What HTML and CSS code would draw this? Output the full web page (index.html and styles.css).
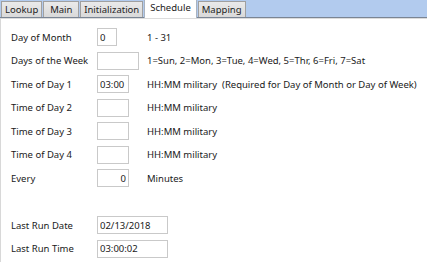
FILE: index.html
```html
<!DOCTYPE html>
<html lang="en">
<head>
    <meta charset="UTF-8">
    <title>Schedule</title>
    <link rel="stylesheet" href="styles.css">
</head>
<body>
    <div class="tabs">
        <div class="tab">Lookup</div>
        <div class="tab">Main</div>
        <div class="tab">Initialization</div>
        <div class="tab active">Schedule</div>
        <div class="tab">Mapping</div>
    </div>
    <div class="panel">
        <div class="form">
            <label>Day of Month</label>
            <input class="w-xs" type="text" value="0">
            <span class="hint">1 - 31</span>

            <label>Days of the Week</label>
            <input class="w-md" type="text" value="">
            <span class="hint">1=Sun, 2=Mon, 3=Tue, 4=Wed, 5=Thr, 6=Fri, 7=Sat</span>

            <label>Time of Day 1</label>
            <input class="w-sm" type="text" value="03:00">
            <span class="hint">HH:MM military &nbsp;(Required for Day of Month or Day of Week)</span>

            <label>Time of Day 2</label>
            <input class="w-sm" type="text" value="">
            <span class="hint">HH:MM military</span>

            <label>Time of Day 3</label>
            <input class="w-sm" type="text" value="">
            <span class="hint">HH:MM military</span>

            <label>Time of Day 4</label>
            <input class="w-sm" type="text" value="">
            <span class="hint">HH:MM military</span>

            <label>Every</label>
            <input class="w-sm num" type="text" value="0">
            <span class="hint">Minutes</span>

            <div class="spacer"></div>

            <label>Last Run Date</label>
            <input class="w-lg" type="text" value="02/13/2018">
            <span class="hint"></span>

            <label>Last Run Time</label>
            <input class="w-lg" type="text" value="03:00:02">
            <span class="hint"></span>
        </div>
    </div>
</body>
</html>
```

FILE: styles.css
```css
body {
    margin: 0;
    font-family: "Noto Sans", "Open Sans", sans-serif;
    font-size: 9.5px;
    color: #1a1a1a;
    background-color: #fff;
}
.tabs {
    display: flex;
    align-items: flex-end;
    height: 17px;
    padding-left: 1px;
    background-color: #b2cbee;
    border-bottom: 1px solid #7a8594;
}
.tab {
    min-width: 28px;
    height: 15px;
    line-height: 15px;
    padding: 0 3px;
    margin-right: 1px;
    text-align: center;
    background: linear-gradient(#eaeaea, #d9d9d9);
    border: 1px solid #a0a0a0;
    border-bottom: none;
    color: #222;
}
.tab.active {
    height: 18px;
    line-height: 15px;
    margin-bottom: -1px;
    padding: 0 5px;
    background: #fff;
    border-color: #a9b3c0;
}
.panel {
    height: 244px;
    border-top: 1px solid #dcdcdc;
    border-left: 1px solid #d8d8d8;
}
.form {
    display: grid;
    grid-template-columns: 86px 50px 1fr;
    grid-auto-rows: 18px;
    row-gap: 5.5px;
    align-items: center;
    padding: 9px 0 0 10px;
}
.form label {
    white-space: nowrap;
}
.form input {
    box-sizing: border-box;
    height: 18px;
    padding: 0 2px;
    font-family: inherit;
    font-size: 9.5px;
    color: #1a1a1a;
    border: 1px solid #c9c9c9;
    background: #fff;
    outline: none;
}
.form .hint {
    white-space: nowrap;
}
.form .spacer {
    grid-column: 1 / -1;
    height: 16px;
}
.w-xs { width: 20px; }
.w-sm { width: 32px; }
.w-md { width: 42px; }
.w-lg { width: 71px; }
.num { text-align: right; padding-right: 5px; }
```
